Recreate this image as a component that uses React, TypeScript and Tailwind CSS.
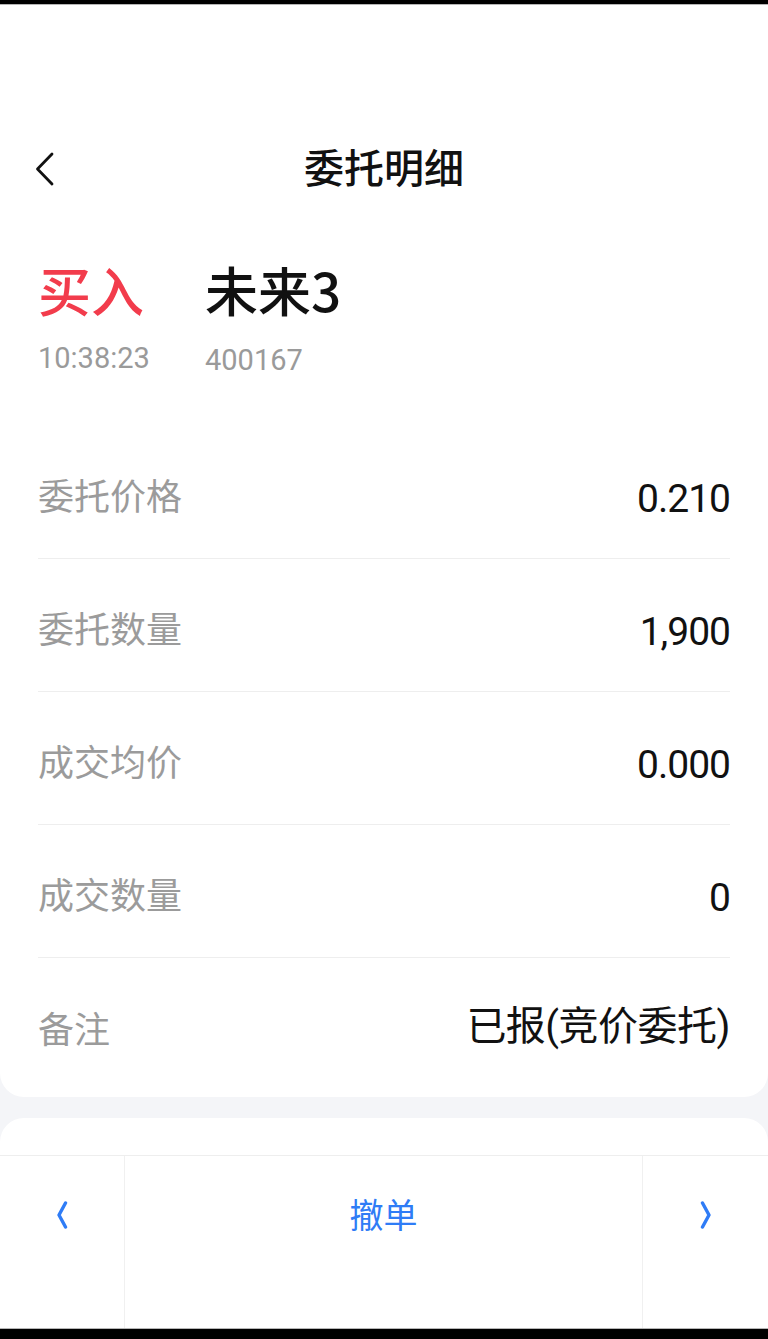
import React from 'react';

const rows = [
  { label: '委托价格', value: '0.210' },
  { label: '委托数量', value: '1,900' },
  { label: '成交均价', value: '0.000' },
  { label: '成交数量', value: '0' },
  { label: '备注', value: '已报(竞价委托)', text: true },
];

const cjk = "font-['Noto_Sans_CJK_SC',sans-serif]";
const num = "font-['Roboto','Noto_Sans_CJK_SC',sans-serif]";

export default function App() {
  return (
    <div className="flex h-[1339px] w-[768px] flex-col overflow-hidden bg-[#f4f5f8]">
      <div className="h-[4px] bg-black" />
      <div className="h-px bg-[#b5b5b5]" />

      <div className="flex h-[1092px] flex-col rounded-b-[24px] bg-white">
        <div className="h-[120px]" />

        <div className="relative flex h-[88px] items-center justify-center">
          <svg
            className="absolute left-[34px] top-[26px]"
            width="22"
            height="36"
            viewBox="0 0 22 36"
            fill="none"
          >
            <path d="M18 3 L3.5 18 L18 33" stroke="#111" strokeWidth="2.8" strokeLinecap="round" strokeLinejoin="round" />
          </svg>
          <h1 className={`${cjk} -mt-[6px] text-[40px] font-medium leading-none text-[#111]`}>委托明细</h1>
        </div>

        <div className="mt-[46px] flex px-[38px]">
          <div className="w-[167px]">
            <div className={`${cjk} text-[53px] font-medium leading-[60px] text-[#f23c4c]`}>买入</div>
            <div className={`${num} mt-[22px] text-[29px] leading-[34px] text-[#9a9a9a]`}>10:38:23</div>
          </div>
          <div>
            <div className={`${cjk} text-[53px] font-medium leading-[60px] text-[#111]`}>未来3</div>
            <div className={`${num} mt-[24px] text-[29px] leading-[34px] text-[#9a9a9a]`}>400167</div>
          </div>
        </div>

        <div className="mt-[49px] px-[38px]">
          {rows.map((r, i) => (
            <div
              key={r.label}
              className={`flex h-[133px] items-center justify-between pt-[4px] ${
                i < rows.length - 1 ? 'border-b border-[#eeeeee]' : ''
              }`}
            >
              <span className={`${cjk} text-[36px] leading-[44px] text-[#9b9b9b]`}>{r.label}</span>
              {r.text ? (
                <span className={`${num} text-[40px] leading-[44px] tracking-[-0.5px] text-[#111]`}>{r.value}</span>
              ) : (
                <span className={`${num} pt-[10px] text-[39px] leading-[44px] tracking-[-1px] text-[#111]`}>{r.value}</span>
              )}
            </div>
          ))}
        </div>
      </div>

      <div className="h-[21px]" />

      <div className="h-[37px] rounded-t-[24px] bg-white" />
      <div className="h-px bg-[#eeeeee]" />
      <div className="flex h-[172px] bg-white">
        <div className="flex w-[125px] justify-center border-r border-[#f0f0f0] pt-[45px]">
          <svg width="14" height="28" viewBox="0 0 14 28" fill="none">
            <path d="M10.5 2 L4 14 L10.5 26" stroke="#2f7cf6" strokeWidth="3.4" strokeLinecap="round" strokeLinejoin="round" />
          </svg>
        </div>
        <div className="flex flex-1 justify-center pt-[34px]">
          <span className={`${cjk} text-[34px] leading-[48px] text-[#2f7cf6]`}>撤单</span>
        </div>
        <div className="flex w-[126px] justify-center border-l border-[#f0f0f0] pt-[45px]">
          <svg width="14" height="28" viewBox="0 0 14 28" fill="none">
            <path d="M3.5 2 L10 14 L3.5 26" stroke="#2f7cf6" strokeWidth="3.4" strokeLinecap="round" strokeLinejoin="round" />
          </svg>
        </div>
      </div>
      <div className="h-px bg-[#b5b5b5]" />
      <div className="flex-1 bg-black" />
    </div>
  );
}
